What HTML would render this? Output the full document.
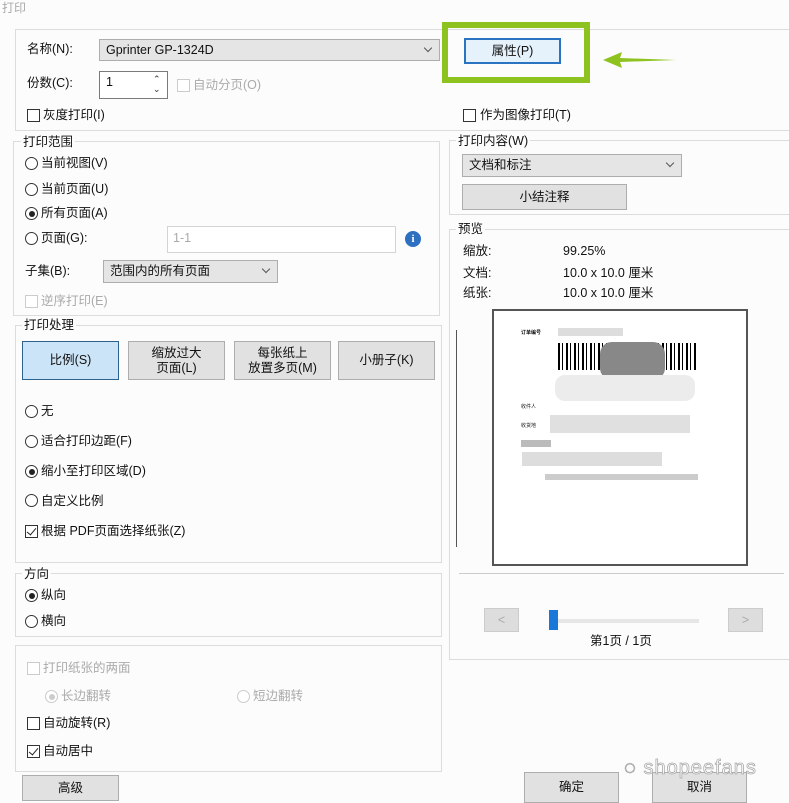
<!DOCTYPE html>
<html><head><meta charset="utf-8"><style>
*{margin:0;padding:0;box-sizing:border-box}
body{width:789px;height:803px;background:#fcfcfc;position:relative;overflow:hidden;font-family:"Liberation Sans","Noto Sans CJK SC",sans-serif;font-size:12.5px;color:#111}
.a{position:absolute;white-space:nowrap;line-height:15px}
.fr{position:absolute;border:1px solid #dcdcdc}
.lg{position:absolute;background:#fcfcfc;padding:0 2px;font-size:12.5px;line-height:14px}
.cb{position:absolute;width:13px;height:13px;border:1px solid #333;background:#fff}
.cb.d{border-color:#ccc}
.cb.k::after{content:"";position:absolute;left:3px;top:0px;width:4px;height:8px;border:solid #222;border-width:0 1.5px 1.5px 0;transform:rotate(40deg)}
.rd{position:absolute;width:13px;height:13px;border:1px solid #333;border-radius:50%;background:#fff}
.rd.k::after{content:"";position:absolute;left:2.5px;top:2.5px;width:6px;height:6px;border-radius:50%;background:#222}
.rd.d{border-color:#ccc}.rd.d.k::after{background:#ccc}
.sel{position:absolute;background:#e5e5e5;border:1px solid #adadad;padding-left:6px;line-height:20px}
.sel::after{content:"";position:absolute;right:8px;top:5px;width:5px;height:5px;border:solid #555;border-width:0 1px 1px 0;transform:rotate(45deg)}
.bt{position:absolute;background:#e1e1e1;border:1px solid #adadad;text-align:center;display:flex;align-items:center;justify-content:center;line-height:15px}
.g{color:#aaa}
</style></head><body>
<div class="a g" style="left:2px;top:1px;font-size:12px">打印</div>
<div class="fr" style="left:15px;top:29px;width:800px;height:102px;border-right:none"></div>
<div class="a" style="left:27px;top:42px">名称(N):</div>
<div class="sel" style="left:99px;top:39px;width:341px;height:22px">Gprinter GP-1324D</div>
<div class="a" style="left:27px;top:76px">份数(C):</div>
<div class="a" style="left:99px;top:71px;width:69px;height:28px;border:1px solid #7a7a7a;background:#fff;padding:3px 6px">1</div>
<div class="a" style="left:153px;top:74px;font-size:9px;line-height:10px;color:#333">&#8963;<br>&#8964;</div>
<div class="cb d" style="left:177px;top:79px"></div>
<div class="a g" style="left:193px;top:78px">自动分页(O)</div>
<div class="cb" style="left:27px;top:109px"></div><div class="a" style="left:43px;top:108px">灰度打印(I)</div>
<div class="a" style="left:442px;top:22px;width:148px;height:61px;border:6px solid #8dc21f"></div>
<div class="bt" style="left:464px;top:38px;width:97px;height:26px;border:2px solid #2a73c0;background:#e5f1fb">属性(P)</div>
<svg class="a" style="left:600px;top:50px" width="80" height="20"><polygon points="3,10 22,2 20,8 76,10 20,12 22,18" fill="#8dc21f"/></svg>
<div class="cb" style="left:463px;top:109px"></div><div class="a" style="left:480px;top:108px">作为图像打印(T)</div>

<div class="fr" style="left:13px;top:141px;width:427px;height:175px"></div>
<div class="lg" style="left:21px;top:135px">打印范围</div>
<div class="rd" style="left:25px;top:157px"></div><div class="a" style="left:41px;top:156px">当前视图(V)</div>
<div class="rd" style="left:25px;top:183px"></div><div class="a" style="left:41px;top:182px">当前页面(U)</div>
<div class="rd k" style="left:25px;top:207px"></div><div class="a" style="left:41px;top:206px">所有页面(A)</div>
<div class="rd" style="left:25px;top:232px"></div><div class="a" style="left:41px;top:231px">页面(G):</div>
<div class="a g" style="left:167px;top:226px;width:229px;height:27px;border:1px solid #d4d4d4;background:#fff;padding:4px 5px">1-1</div>
<div class="a" style="left:405px;top:231px;width:16px;height:16px;border-radius:50%;background:#2d6fc0;color:#fff;font:bold 11px 'Liberation Serif',serif;text-align:center;line-height:16px">i</div>
<div class="a" style="left:25px;top:264px">子集(B):</div>
<div class="sel" style="left:103px;top:260px;width:175px;height:23px">范围内的所有页面</div>
<div class="cb d" style="left:25px;top:295px"></div><div class="a g" style="left:41px;top:294px">逆序打印(E)</div>

<div class="fr" style="left:15px;top:325px;width:427px;height:238px"></div>
<div class="lg" style="left:22px;top:318px">打印处理</div>
<div class="bt" style="left:22px;top:341px;width:97px;height:39px;background:#cce4f7;border-color:#2c628b">比例(S)</div>
<div class="bt" style="left:128px;top:341px;width:97px;height:39px">缩放过大<br>页面(L)</div>
<div class="bt" style="left:234px;top:341px;width:97px;height:39px">每张纸上<br>放置多页(M)</div>
<div class="bt" style="left:338px;top:341px;width:97px;height:39px">小册子(K)</div>
<div class="rd" style="left:25px;top:405px"></div><div class="a" style="left:41px;top:404px">无</div>
<div class="rd" style="left:25px;top:435px"></div><div class="a" style="left:41px;top:434px">适合打印边距(F)</div>
<div class="rd k" style="left:25px;top:465px"></div><div class="a" style="left:41px;top:464px">缩小至打印区域(D)</div>
<div class="rd" style="left:25px;top:494px"></div><div class="a" style="left:41px;top:494px">自定义比例</div>
<div class="cb k" style="left:25px;top:525px"></div><div class="a" style="left:41px;top:524px">根据 PDF页面选择纸张(Z)</div>

<div class="fr" style="left:15px;top:573px;width:427px;height:64px"></div>
<div class="lg" style="left:22px;top:567px">方向</div>
<div class="rd k" style="left:25px;top:589px"></div><div class="a" style="left:41px;top:588px">纵向</div>
<div class="rd" style="left:25px;top:615px"></div><div class="a" style="left:41px;top:614px">横向</div>

<div class="fr" style="left:15px;top:645px;width:427px;height:127px"></div>
<div class="cb d" style="left:27px;top:662px"></div><div class="a g" style="left:43px;top:661px">打印纸张的两面</div>
<div class="rd d k" style="left:45px;top:690px"></div><div class="a g" style="left:61px;top:689px">长边翻转</div>
<div class="rd d" style="left:237px;top:690px"></div><div class="a g" style="left:253px;top:689px">短边翻转</div>
<div class="cb" style="left:27px;top:717px"></div><div class="a" style="left:43px;top:716px">自动旋转(R)</div>
<div class="cb k" style="left:27px;top:745px"></div><div class="a" style="left:43px;top:744px">自动居中</div>
<div class="bt" style="left:22px;top:775px;width:97px;height:26px">高级</div>

<div class="fr" style="left:449px;top:140px;width:360px;height:75px"></div>
<div class="lg" style="left:456px;top:134px">打印内容(W)</div>
<div class="sel" style="left:462px;top:154px;width:220px;height:23px">文档和标注</div>
<div class="bt" style="left:462px;top:184px;width:165px;height:26px">小结注释</div>

<div class="fr" style="left:449px;top:229px;width:360px;height:431px"></div>
<div class="lg" style="left:456px;top:222px">预览</div>
<div class="a" style="left:463px;top:244px">缩放:</div><div class="a" style="left:563px;top:244px">99.25%</div>
<div class="a" style="left:463px;top:266px">文档:</div><div class="a" style="left:563px;top:266px">10.0 x 10.0 厘米</div>
<div class="a" style="left:463px;top:286px">纸张:</div><div class="a" style="left:563px;top:286px">10.0 x 10.0 厘米</div>
<div class="a" style="left:456px;top:330px;width:1px;height:217px;background:#555"></div>
<div class="a" style="left:492px;top:309px;width:256px;height:257px;border:2px solid #555;background:#fff"></div>
<div class="a" style="left:521px;top:326px;font-size:5px;font-weight:bold">订单编号</div>
<div class="a" style="left:558px;top:328px;width:65px;height:8px;background:#ddd"></div>
<div class="a" style="left:558px;top:343px;width:138px;height:27px;background:repeating-linear-gradient(90deg,#000 0 2px,#fff 2px 4px,#000 4px 5px,#fff 5px 8px)"></div>
<div class="a" style="left:600px;top:342px;width:65px;height:38px;background:#888;border-radius:12px"></div>
<div class="a" style="left:555px;top:375px;width:140px;height:26px;background:#ececec;border-radius:10px"></div>
<div class="a" style="left:521px;top:400px;font-size:5px">收件人</div>
<div class="a" style="left:550px;top:415px;width:140px;height:18px;background:#e0e0e0"></div>
<div class="a" style="left:521px;top:419px;font-size:5px">收货地</div>
<div class="a" style="left:521px;top:440px;width:30px;height:7px;background:#bbb"></div>
<div class="a" style="left:522px;top:452px;width:140px;height:14px;background:#ddd"></div>
<div class="a" style="left:545px;top:474px;width:153px;height:6px;background:#ccc"></div>
<div class="a" style="left:459px;top:573px;width:325px;height:1px;background:#ccc"></div>
<div class="bt" style="left:484px;top:608px;width:35px;height:24px;border-color:#ccc;background:#ddd;color:#aaa">&lt;</div>
<div class="bt" style="left:728px;top:608px;width:35px;height:24px;border-color:#ccc;background:#ddd;color:#aaa">&gt;</div>
<div class="a" style="left:555px;top:619px;width:144px;height:4px;background:#e6e6e6"></div>
<div class="a" style="left:549px;top:610px;width:9px;height:20px;background:#1a78d8"></div>
<div class="a" style="left:590px;top:634px">第1页 / 1页</div>

<div class="bt" style="left:524px;top:772px;width:95px;height:31px">确定</div>
<div class="bt" style="left:652px;top:772px;width:95px;height:31px">取消</div>
<div class="a" style="left:624px;top:756px;font-size:20px;line-height:24px;color:#fff;-webkit-text-stroke:0.8px #aaa;letter-spacing:1px">◌ shopeefans</div>
</body></html>
